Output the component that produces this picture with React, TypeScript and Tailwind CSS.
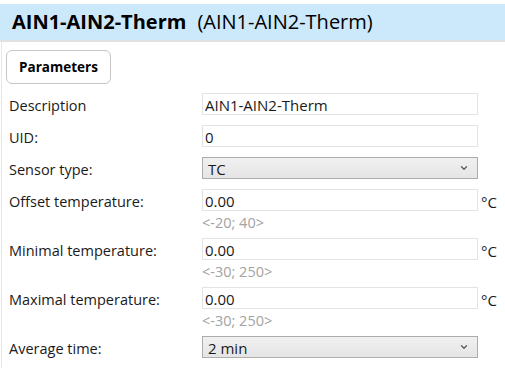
import { ChevronDown } from "lucide-react";

type Field =
  | { kind: "text"; label: string; value: string; unit?: string; range?: string }
  | { kind: "select"; label: string; value: string };

const fields: Field[] = [
  { kind: "text", label: "Description", value: "AIN1-AIN2-Therm" },
  { kind: "text", label: "UID:", value: "0" },
  { kind: "select", label: "Sensor type:", value: "TC" },
  { kind: "text", label: "Offset temperature:", value: "0.00", unit: "°C", range: "<-20; 40>" },
  { kind: "text", label: "Minimal temperature:", value: "0.00", unit: "°C", range: "<-30; 250>" },
  { kind: "text", label: "Maximal temperature:", value: "0.00", unit: "°C", range: "<-30; 250>" },
  { kind: "select", label: "Average time:", value: "2 min" },
];

function Row({ field }: { field: Field }) {
  return (
    <div className="flex items-start">
      <div className="h-[22px] w-[196px] shrink-0 pl-[3px] pt-[3px] text-[14.5px] leading-[20px]">{field.label}</div>
      <div className="w-[276px] shrink-0">
        {field.kind === "select" ? (
          <div className="flex h-[22px] items-center justify-between border border-[#adadad] bg-gradient-to-b from-[#f0f0f0] to-[#e5e5e5] pl-[5px] pr-[8px]">
            <span className="pt-[2px]">{field.value}</span>
            <ChevronDown size={10} strokeWidth={3} className="text-[#5a5a5a]" />
          </div>
        ) : (
          <div className="flex h-[22px] items-center border border-[#e3e3e3] bg-white pl-[2px] pt-[2px]">{field.value}</div>
        )}
        {field.kind === "text" && field.range && (
          <div className="mt-[3px] h-[14px] text-[14.5px] leading-[18px] text-[#a3a3a3]">{field.range}</div>
        )}
      </div>
      {field.kind === "text" && field.unit && <div className="h-[22px] pl-[3px] pt-[3px] leading-[20px]">{field.unit}</div>}
    </div>
  );
}

export default function App() {
  return (
    <div className="h-[370px] w-[505px] overflow-hidden bg-white pt-[4px] text-[15px] text-[#1a1a1a]" style={{ fontFamily: "'Open Sans', sans-serif" }}>
      <div className="flex h-[38px] items-center gap-[11px] border-b-2 border-[#e1e1e1] bg-[#cce8fb] pl-[12px]">
        <span className="text-[20px] font-bold text-black">AIN1-AIN2-Therm</span>
        <span className="text-[20px] text-black">(AIN1-AIN2-Therm)</span>
      </div>
      <div className="ml-[1px] flex h-[326px] flex-col border-l border-[#e6e6e6] pl-[4px]">
        <button className="mt-[8px] h-[34px] w-[105px] shrink-0 rounded-[6px] border border-[#c6c6c6] bg-white text-[13.5px] font-bold text-black">
          Parameters
        </button>
        <div className="mt-[9px] flex flex-col gap-[10px]">
          {fields.map((f) => (
            <Row key={f.label} field={f} />
          ))}
        </div>
      </div>
    </div>
  );
}
